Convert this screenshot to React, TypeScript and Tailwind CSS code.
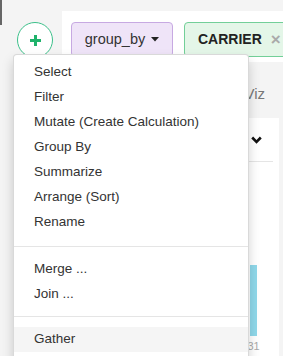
import { useState } from "react";

type MenuEntry = { label: string } | { divider: true; className: string };

const menu: MenuEntry[] = [
  { label: "Select" },
  { label: "Filter" },
  { label: "Mutate (Create Calculation)" },
  { label: "Group By" },
  { label: "Summarize" },
  { label: "Arrange (Sort)" },
  { label: "Rename" },
  { divider: true, className: "mt-[11px] mb-[10px]" },
  { label: "Merge ..." },
  { label: "Join ..." },
  { divider: true, className: "mt-[9px] mb-[10px]" },
  { label: "Gather" },
];

function StepMenu() {
  const [hover, setHover] = useState("Gather");

  return (
    <div className="absolute left-[13px] top-[54px] w-[236px] bg-white border border-black/15 rounded-[4px] shadow-[0_6px_12px_rgba(0,0,0,0.175)] pt-[5px] pb-[30px]">
      {menu.map((item, i) =>
        "divider" in item ? (
          <div key={i} className={`h-px bg-[#e5e5e5] ${item.className}`} />
        ) : (
          <div
            key={item.label}
            onMouseEnter={() => setHover(item.label)}
            className={`h-[25px] flex items-center pl-[20px] text-[13.5px] text-[#333] whitespace-nowrap ${
              hover === item.label ? "bg-[#f5f5f5]" : ""
            }`}
          >
            {item.label}
          </div>
        )
      )}
    </div>
  );
}

export default function App() {
  return (
    <div
      className="relative flex w-[283px] h-[356px] overflow-hidden bg-[#f4f4f4]"
      style={{ fontFamily: '"Liberation Sans", Arial, sans-serif' }}
    >
      {/* left rail */}
      <div className="relative w-[62px] shrink-0 pt-[22px] pl-[17px]">
        <div className="absolute left-0 top-0 w-[2px] h-[25px] bg-[#666]" />
        <button className="w-[36px] h-[36px] rounded-full border border-[#3cc08a] bg-white flex items-center justify-center">
          <span className="relative block w-[11px] h-[11px]">
            <span className="absolute left-0 top-[4px] w-[11px] h-[3px] bg-[#1fb26b]" />
            <span className="absolute left-[4px] top-0 w-[3px] h-[11px] bg-[#1fb26b]" />
          </span>
        </button>
      </div>

      <div className="flex-1 min-w-0 flex flex-col pt-[11px]">
        {/* step toolbar */}
        <div className="h-[51px] shrink-0 bg-white flex items-start gap-[11px] pl-[9px] pt-[11px] overflow-hidden">
          <button className="w-[102px] h-[35px] shrink-0 rounded-[4px] border border-[#c7a9e2] bg-[#efe4f8] text-[#333] text-[14.5px] flex items-center justify-center gap-[6px]">
            group_by
            <svg width="8" height="5" viewBox="0 0 8 5">
              <path d="M0 0h8L4 4.5z" fill="#222" />
            </svg>
          </button>
          <div className="w-[140px] h-[35px] shrink-0 rounded-[4px] border border-[#72cf98] bg-[#e4f6e8] flex items-center pl-[13px] gap-[9px]">
            <span className="text-[14px] font-bold text-[#222]">CARRIER</span>
            <span className="text-[17px] font-bold text-[#aaa]">×</span>
          </div>
        </div>

        {/* view tabs */}
        <div className="h-[56px] shrink-0 flex items-center justify-end pr-[18px] pt-[8px]">
          <span className="text-[15px] text-[#777]">Viz</span>
        </div>

        {/* chart card */}
        <div className="flex-1 ml-[10px] mr-[4px] bg-white flex flex-col">
          <div className="h-[44px] shrink-0 mr-[6px] border-b border-[#e5e5e5] flex items-center justify-end pr-[11px]">
            <svg width="11" height="8" viewBox="0 0 11 8">
              <path d="M1.2 1.5l4.3 4.3 4.3-4.3" fill="none" stroke="#111" strokeWidth="2.6" />
            </svg>
          </div>
          <div className="flex justify-end pr-[22px] pt-[103px]">
            <div className="w-[7px] flex flex-col items-center">
              <div className="w-[7px] h-[71px] bg-[#8fd8ea]" />
              <span className="mt-[4px] text-[11px] leading-[13px] text-[#aaa] whitespace-nowrap">31</span>
            </div>
          </div>
        </div>
      </div>

      <StepMenu />
    </div>
  );
}
